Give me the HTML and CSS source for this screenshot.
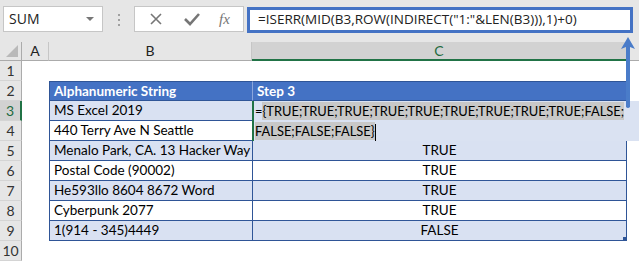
FILE: index.html
```html
<!DOCTYPE html>
<html lang="en">
<head>
  <meta charset="UTF-8" />
  <title>ISERR Step 3</title>
  <link rel="stylesheet" href="styles.css">
</head>
<body>
  <div class="toolbar">
    <div class="name-box">SUM<span class="caret"></span></div>
    <div class="grip"><i></i><i></i><i></i></div>
    <div class="btn-box">
      <svg class="btn" width="16" height="16" viewBox="0 0 16 16"><path d="M3 3 L13 13 M13 3 L3 13" stroke="#767676" stroke-width="1.6" fill="none"/></svg>
      <svg class="btn" width="18" height="16" viewBox="0 0 18 16"><path d="M2 8 L7 13 L16 3" stroke="#767676" stroke-width="2.6" fill="none"/></svg>
      <span class="fx">fx</span>
    </div>
    <div class="formula">=ISERR(MID(B3,ROW(INDIRECT("1:"&amp;LEN(B3))),1)+0)</div>
  </div>

  <div class="sheet">
    <div class="colhead corner"><span class="tri"></span></div>
    <div class="colhead">A</div>
    <div class="colhead">B</div>
    <div class="colhead sel">C</div>
    <div class="colhead last"></div>

    <div class="rowhead">1</div><div></div><div></div><div></div><div></div>

    <div class="rowhead">2</div><div></div>
    <div class="cell b th top">Alphanumeric String</div>
    <div class="cell c th top">Step 3</div><div></div>

    <div class="rowhead sel">3</div><div></div>
    <div class="cell b alt">MS Excel 2019</div>
    <div class="cell c alt"></div><div></div>

    <div class="rowhead">4</div><div></div>
    <div class="cell b">440 Terry Ave N Seattle</div>
    <div class="cell c"></div><div></div>

    <div class="rowhead">5</div><div></div>
    <div class="cell b alt">Menalo Park, CA. 13 Hacker Way</div>
    <div class="cell c alt mid">TRUE</div><div></div>

    <div class="rowhead">6</div><div></div>
    <div class="cell b">Postal Code (90002)</div>
    <div class="cell c mid">TRUE</div><div></div>

    <div class="rowhead">7</div><div></div>
    <div class="cell b alt">He593llo 8604 8672 Word</div>
    <div class="cell c alt mid">TRUE</div><div></div>

    <div class="rowhead">8</div><div></div>
    <div class="cell b">Cyberpunk 2077</div>
    <div class="cell c mid">TRUE</div><div></div>

    <div class="rowhead">9</div><div></div>
    <div class="cell b alt">1(914 - 345)4449</div>
    <div class="cell c alt mid">FALSE<span class="handle"></span></div><div></div>

    <div class="rowhead">10</div><div></div><div></div><div></div><div></div>

    <!-- in-cell edit box for C3 -->
    <div class="edit">
      <div class="edit-line">=<span class="hl">{TRUE;TRUE;TRUE;TRUE;TRUE;TRUE;TRUE;TRUE;TRUE;FALSE;</span></div>
      <div class="edit-line"><span class="hl">FALSE;FALSE;FALSE}</span><span class="cursor"></span></div>
    </div>
  </div>

  <svg class="arrow" width="14" height="72" viewBox="0 0 14 72">
    <path d="M7 0 L14 12 L9 10 L9 70 Q7 72 5 70 L5 10 L0 12 Z" fill="#4a7cc9"/>
  </svg>
</body>
</html>
```

FILE: styles.css
```css
body {
  margin: 0;
  width: 639px;
  height: 262px;
  overflow: hidden;
  background-color: #ffffff;
  font-family: 'Lato', 'Liberation Sans', sans-serif;
  position: relative;
}

.toolbar {
  display: flex;
  align-items: flex-start;
  height: 42px;
  padding: 6px 0 0 3px;
  box-sizing: border-box;
  background-color: #e6e6e6;
}

.name-box {
  width: 100px;
  height: 26px;
  box-sizing: border-box;
  border: 1px solid #c6c6c6;
  background-color: #ffffff;
  font-family: 'Open Sans', sans-serif;
  font-size: 14px;
  color: #222;
  padding-left: 5px;
  line-height: 24px;
  position: relative;
}

.caret {
  position: absolute;
  right: 8px;
  top: 10px;
  border-left: 4px solid transparent;
  border-right: 4px solid transparent;
  border-top: 4px solid #777;
}

.grip {
  width: 31px;
  display: flex;
  flex-direction: column;
  align-items: center;
  gap: 3px;
  padding-top: 8px;
}

.grip i {
  width: 2px;
  height: 2px;
  background-color: #a0a0a0;
}

.btn-box {
  width: 110px;
  height: 26px;
  box-sizing: border-box;
  border: 1px solid #c6c6c6;
  background-color: #ffffff;
  display: flex;
  align-items: center;
  justify-content: space-around;
  padding: 0 4px;
}

.fx {
  font-family: 'Liberation Serif', serif;
  font-style: italic;
  font-size: 15px;
  color: #767676;
}

.formula {
  width: 386px;
  height: 26px;
  margin: 1px 0 0 3px;
  box-sizing: border-box;
  border: 3px solid #4472c4;
  background-color: #ffffff;
  font-family: 'Open Sans', sans-serif;
  font-size: 13.5px;
  color: #222;
  padding-left: 8px;
  line-height: 19px;
  white-space: nowrap;
  overflow: hidden;
}

.sheet {
  display: grid;
  grid-template-columns: 22px 27px 203px 375px 12px;
  grid-template-rows: 19px repeat(10, 20px);
  position: relative;
}

.colhead {
  background-color: #e6e6e6;
  border-right: 1px solid #c6c6c6;
  border-bottom: 1px solid #ababab;
  box-sizing: border-box;
  font-size: 14px;
  color: #222;
  text-align: center;
  line-height: 18px;
}

.colhead.corner {
  position: relative;
  border-right: 1px solid #ababab;
}

.tri {
  position: absolute;
  right: 3px;
  bottom: 3px;
  border-left: 12px solid transparent;
  border-bottom: 12px solid #b9b9b9;
}

.colhead.sel {
  background-color: #d2d2d2;
  border-bottom: 2px solid #217346;
  color: #1e6b40;
}

.colhead.last {
  border-right: none;
}

.rowhead {
  background-color: #e6e6e6;
  border-right: 1px solid #ababab;
  border-bottom: 1px solid #d4d4d4;
  box-sizing: border-box;
  font-size: 14px;
  color: #333;
  text-align: center;
  line-height: 19px;
}

.rowhead.sel {
  background-color: #d2d2d2;
  border-right: 2px solid #217346;
  color: #1e6b40;
}

.cell {
  box-sizing: border-box;
  border-bottom: 1px solid #2f5597;
  border-left: 1px solid #2f5597;
  font-size: 13.5px;
  color: #000;
  line-height: 19px;
  padding-left: 4px;
  white-space: nowrap;
  position: relative;
}

.cell.c {
  border-right: 1px solid #2f5597;
}

.cell.top {
  border-top: 1px solid #2f5597;
  line-height: 18px;
}

.cell.th {
  background-color: #4472c4;
  color: #ffffff;
  font-weight: bold;
}

.cell.c.th {
  border-left-color: #8aa6dc;
}

.cell.alt {
  background-color: #d9e1f2;
}

.cell.mid {
  text-align: center;
  padding-left: 0;
}

.handle {
  position: absolute;
  right: -1px;
  bottom: -1px;
  width: 4px;
  height: 4px;
  background-color: #2f5597;
}

.edit {
  position: absolute;
  left: 252px;
  top: 59px;
  width: 387px;
  height: 40px;
  background-color: #dae2f2;
  border-left: 2px solid #217346;
  box-sizing: border-box;
  padding-left: 1px;
  font-size: 12.9px;
  color: #000;
}

.edit-line {
  height: 20px;
  line-height: 20px;
  white-space: nowrap;
}

.hl {
  background-color: #c8c8c8;
  padding: 1px 0;
}

.cursor {
  display: inline-block;
  width: 1px;
  height: 17px;
  background-color: #000;
  vertical-align: middle;
}

.arrow {
  position: absolute;
  left: 621px;
  top: 37px;
}
```
